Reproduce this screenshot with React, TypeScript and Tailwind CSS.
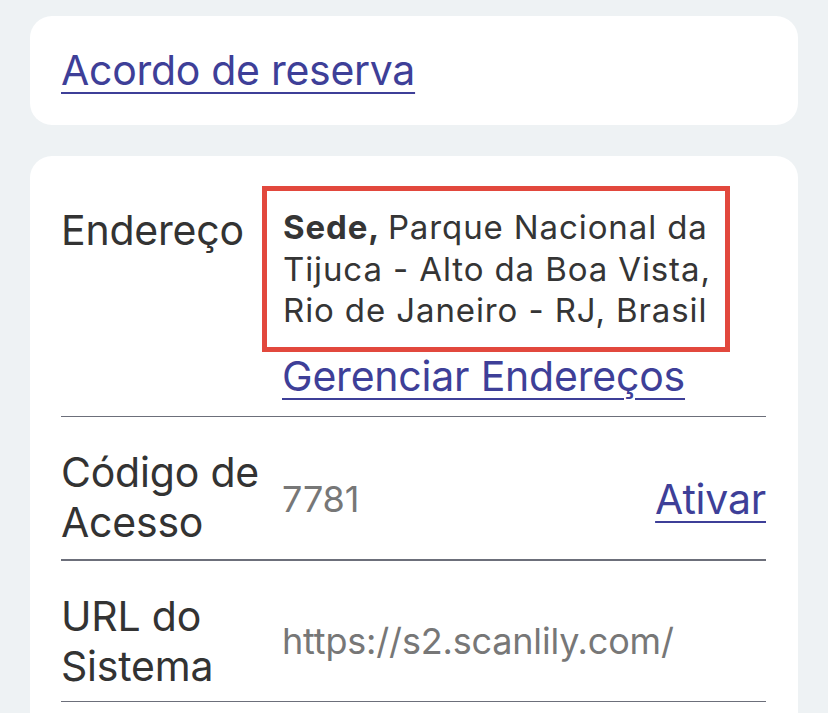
import React from "react";

const font = { fontFamily: "Inter, 'Noto Sans', sans-serif" };

function Divider() {
  return <div className="h-[1.5px] bg-[#6c6f7a]" />;
}

export default function App() {
  return (
    <div
      className="min-h-[713px] h-[713px] overflow-hidden bg-[#eef2f4] px-[30px] pt-[16px]"
      style={font}
    >
      <div className="rounded-[22px] bg-white px-[31px] py-[30px]">
        <a
          href="#"
          className="text-[41px] leading-[49px] tracking-[-0.007em] text-[#3e3f98] underline decoration-[2px] underline-offset-[7px]"
        >
          Acordo de reserva
        </a>
      </div>

      <div className="mt-[31px] rounded-t-[22px] bg-white pl-[31px] pr-[32px] pb-[40px]">
        {/* Endereço */}
        <div className="flex pt-[30px] pb-[15px]">
          <div className="w-[201px] shrink-0 pt-[20px] text-[41px] leading-[49px] tracking-[-0.005em] text-[#333333]">
            Endereço
          </div>
          <div className="flex flex-col">
            <div className="w-[468px] border-[5px] border-[#e2483d] pl-[16px] pr-[4px] pt-[16px] pb-[15px] text-[33px] leading-[41.5px] tracking-[0.027em] text-[#353535]">
              <span className="font-bold">Sede, </span>Parque Nacional da Tijuca - Alto da Boa Vista, Rio de Janeiro - RJ, Brasil
            </div>
            <a
              href="#"
              className="pl-[20px] text-[41px] leading-[49px] tracking-[-0.005em] text-[#3e3f98] underline decoration-[2px] underline-offset-[7px]"
            >
              Gerenciar Endereços
            </a>
          </div>
        </div>
        <Divider />

        {/* Código de Acesso */}
        <div className="flex items-center pt-[30px] pb-[12px]">
          <div className="w-[221px] shrink-0 text-[41px] leading-[50px] tracking-[-0.005em] text-[#333333]">
            Código de
            <br />
            Acesso
          </div>
          <div className="flex-1 pt-[4px] text-[36px] leading-[46px] tracking-[-0.005em] text-[#777777]">
            7781
          </div>
          <a
            href="#"
            className="pt-[4px] text-[41px] leading-[49px] tracking-[-0.005em] text-[#3e3f98] underline decoration-[2px] underline-offset-[7px]"
          >
            Ativar
          </a>
        </div>
        <Divider />

        {/* URL do Sistema */}
        <div className="flex items-center pt-[30px] pb-[10px]">
          <div className="w-[221px] shrink-0 text-[41px] leading-[50px] tracking-[-0.005em] text-[#333333]">
            URL do
            <br />
            Sistema
          </div>
          <div className="flex-1 text-[36px] leading-[46px] tracking-[-0.005em] text-[#777777]">
            https://s2.scanlily.com/
          </div>
        </div>
        <Divider />
      </div>
    </div>
  );
}
